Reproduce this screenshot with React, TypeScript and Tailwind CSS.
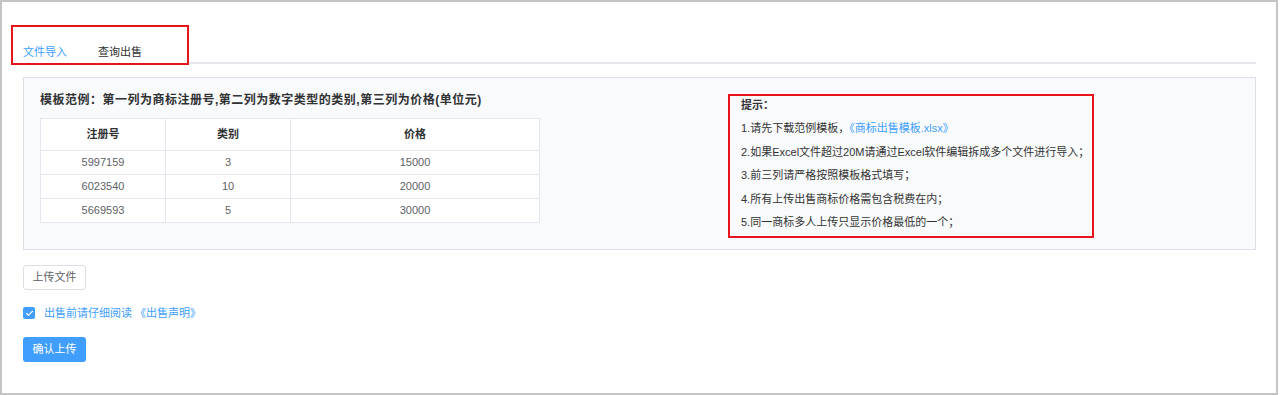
import { Check } from "lucide-react";

const rows = [
  { reg: "5997159", cls: "3", price: "15000" },
  { reg: "6023540", cls: "10", price: "20000" },
  { reg: "5669593", cls: "5", price: "30000" },
];

const tips = [
  "2.如果Excel文件超过20M请通过Excel软件编辑拆成多个文件进行导入；",
  "3.前三列请严格按照模板格式填写；",
  "4.所有上传出售商标价格需包含税费在内；",
  "5.同一商标多人上传只显示价格最低的一个；",
];

const font = { fontFamily: '"Liberation Sans", "Noto Sans CJK SC", sans-serif' };

const App = () => {
  return (
    <div className="w-[1280px] h-[395px] bg-white" style={font}>
      <div className="w-[1278px] h-[395px] border-2 border-[#c4c4c4] bg-white">
        {/* tabs */}
        <div className="flex items-end ml-[9px] mt-[23px] mr-[20px]">
          <div className="w-[178px] h-[40px] border-2 border-[#e8141c] flex items-end pb-[3px] pl-[10px] text-[11px] leading-[16px]">
            <span className="text-[#409eff]">文件导入</span>
            <span className="ml-[31px] text-[#303133]">查询出售</span>
          </div>
          <div className="flex-1 border-b-2 border-[#e4e7ed] mb-px" />
        </div>

        {/* template panel */}
        <div className="ml-[21px] mt-[12px] w-[1233px] h-[173px] border border-[#dcdfe6] bg-[#f9fafc] flex items-start pl-[16px]">
          <div className="pt-[14px]">
            <p className="text-[12px] leading-[16px] font-bold tracking-[0.5px] text-[#303133]">
              模板范例：第一列为商标注册号,第二列为数字类型的类别,第三列为价格(单位元)
            </p>
            <table className="mt-[10px] w-[500px] border-collapse bg-white text-[11px] text-[#606266] text-center">
              <thead>
                <tr className="h-[32px]">
                  <th className="w-[125px] border border-[#e4e7ed] font-bold text-[#303133]">注册号</th>
                  <th className="w-[125px] border border-[#e4e7ed] font-bold text-[#303133]">类别</th>
                  <th className="border border-[#e4e7ed] font-bold text-[#303133]">价格</th>
                </tr>
              </thead>
              <tbody>
                {rows.map((r) => (
                  <tr key={r.reg} className="h-[24px]">
                    <td className="border border-[#e4e7ed]">{r.reg}</td>
                    <td className="border border-[#e4e7ed]">{r.cls}</td>
                    <td className="border border-[#e4e7ed]">{r.price}</td>
                  </tr>
                ))}
              </tbody>
            </table>
          </div>

          <div className="ml-[188px] mt-[16px] w-[366px] h-[144px] border-2 border-[#e8141c] pl-[11px] pt-px">
            <div className="flex flex-col gap-[7.4px] text-[11px] leading-[16px] text-[#333333]">
              <p className="font-semibold">提示：</p>
              <p>
                1.请先下载范例模板，
                <span className="text-[#409eff]">《商标出售模板.xlsx》</span>
              </p>
              {tips.map((t) => (
                <p key={t}>{t}</p>
              ))}
            </div>
          </div>
        </div>

        {/* actions */}
        <div className="ml-[21px] mt-[15px] flex flex-col items-start">
          <button className="w-[63px] h-[25px] border border-[#dcdfe6] rounded-[3px] bg-white text-[11px] text-[#606266]">
            上传文件
          </button>
          <label className="mt-[17px] flex items-center h-[12px]">
            <span className="w-[12px] h-[12px] rounded-[2px] bg-[#409eff] flex items-center justify-center">
              <Check className="w-[9px] h-[9px] text-white" strokeWidth={3} />
            </span>
            <span className="ml-[9px] text-[11px] leading-[16px] text-[#409eff]">
              出售前请仔细阅读 《出售声明》
            </span>
          </label>
          <button className="mt-[18px] w-[63px] h-[25px] rounded-[3px] bg-[#409eff] text-[11px] text-white">
            确认上传
          </button>
        </div>
      </div>
    </div>
  );
};

export default App;
